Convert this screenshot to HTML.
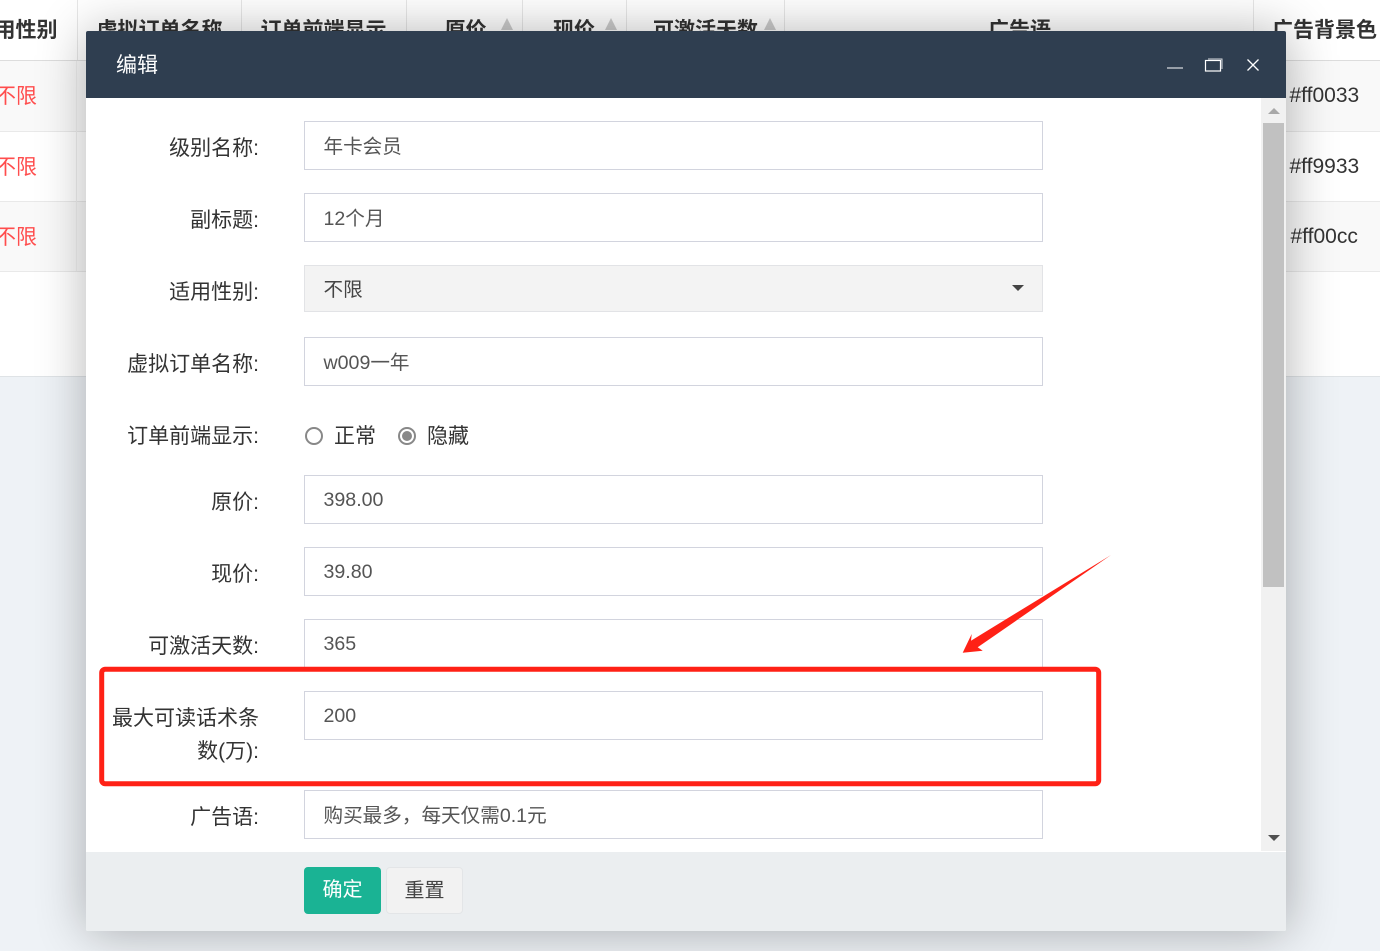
<!DOCTYPE html>
<html lang="zh-CN"><head><meta charset="utf-8"><title>编辑</title>
<style>
*{box-sizing:border-box}
html,body{margin:0;padding:0;width:1380px;height:951px;overflow:hidden;background:#eef2f6}
body{position:relative;font-family:"Liberation Sans","Noto Sans CJK SC",sans-serif;font-size:21px;color:#333}
.a{position:absolute;white-space:nowrap}
.th{top:16px;font-weight:bold;line-height:30px;color:#333}
.sep{position:absolute;top:0;height:60px;width:1px;background:#e7e7e7}
.rsep{position:absolute;width:1px;background:#eeeeee}
.tri{position:absolute;top:18px;width:0;height:0;border-left:6px solid transparent;border-right:6px solid transparent;border-bottom:12px solid #cccccc}
.row{position:absolute;left:0;width:1380px;height:70px;border-bottom:1px solid #e9e9e9}
.no{left:-5px;color:#ff4d4d;line-height:30px}
.hx{line-height:30px;color:#333}
#m{position:absolute;left:86px;top:31px;width:1200px;height:900px;background:#fff;border-radius:2px;box-shadow:1px 1px 50px rgba(0,0,0,.3);overflow:hidden}
#h{position:absolute;left:0;top:0;width:1200px;height:67px;background:#2f3e50;color:#fff}
#f{position:absolute;left:0;top:821px;width:1200px;height:79px;background:#ebeef0}
.lb{position:absolute;right:1027px;text-align:right;color:#333;line-height:33px;white-space:nowrap}
.ip{position:absolute;left:218px;width:739px;height:49px;background:#fff;border:1px solid #d2d4de;padding-left:18.5px;font-size:19.6px;line-height:48px;color:#555;white-space:nowrap}
.ip.c{line-height:50px}
.ra{position:absolute;width:18px;height:18px;border-radius:50%;border:2px solid #888;background:#fff}
</style></head><body>
<div class="a" style="left:0;top:0;width:1380px;height:377px;background:#fff;border-bottom:1px solid #dfe3e6"></div>
<div class="a" style="left:0;top:60px;width:1380px;height:1px;background:#ddd"></div>
<div class="row" style="top:61px;height:71px;background:#f9f9f9"></div>
<div class="row" style="top:132px;background:#fff"></div>
<div class="row" style="top:202px;background:#f9f9f9"></div>
<div class="sep" style="left:77px"></div><div class="sep" style="left:241px"></div><div class="sep" style="left:406px"></div><div class="sep" style="left:522px"></div><div class="sep" style="left:626px"></div><div class="sep" style="left:784px"></div><div class="sep" style="left:1253px"></div>
<div class="rsep" style="left:76px;top:61px;height:210px"></div>
<div class="a th" style="left:-26.5px">适用性别</div>
<div class="a th" style="left:96.5px">虚拟订单名称</div>
<div class="a th" style="left:260.5px">订单前端显示</div>
<div class="a th" style="left:444.5px">原价</div>
<div class="a th" style="left:553px">现价</div>
<div class="a th" style="left:653px">可激活天数</div>
<div class="a th" style="left:988px">广告语</div>
<div class="a th" style="left:1272px">广告背景色</div>
<div class="tri" style="left:501px"></div><div class="tri" style="left:605px"></div><div class="tri" style="left:764px"></div>
<div class="a no" style="top:82px">不限</div>
<div class="a no" style="top:153px">不限</div>
<div class="a no" style="top:223px">不限</div>
<div class="a hx" style="left:1289.5px;top:81px">#ff0033</div>
<div class="a hx" style="left:1289.5px;top:152px">#ff9933</div>
<div class="a hx" style="left:1290.5px;top:222px">#ff00cc</div>

<div id="m">
 <div id="h">
  <div class="a" style="left:30px;top:18px;line-height:34px;color:#fff">编辑</div>
  <svg class="a" style="left:1070px;top:20px" width="120" height="30" viewBox="0 0 120 30" fill="none" stroke="#fff">
   <path d="M11 17H27" stroke-width="1.1"/>
   <rect x="49.5" y="9.5" width="15" height="10.5" stroke-width="1.2"/>
   <path d="M52 8H66V18" stroke-width="1" opacity=".8"/>
   <path d="M91.5 8.5L102.5 19.5M102.5 8.5L91.5 19.5" stroke-width="1.3"/>
  </svg>
 </div>

 <div class="lb" style="top:101px">级别名称:</div>
 <div class="ip c" style="top:90px">年卡会员</div>
 <div class="lb" style="top:173px">副标题:</div>
 <div class="ip c" style="top:162px">12个月</div>
 <div class="lb" style="top:245px">适用性别:</div>
 <div class="ip c" style="top:234px;height:47px;line-height:48px;background:#f3f3f3;border-color:#e2e3e6;color:#444">不限</div>
 <div class="a" style="left:926px;top:254px;width:0;height:0;border-left:6px solid transparent;border-right:6px solid transparent;border-top:6px solid #444"></div>
 <div class="lb" style="top:317px">虚拟订单名称:</div>
 <div class="ip c" style="top:306px">w009一年</div>
 <div class="lb" style="top:389px">订单前端显示:</div>
 <div class="ra" style="left:219px;top:396px"></div>
 <div class="a" style="left:248px;top:389px;line-height:33px;color:#333">正常</div>
 <div class="ra" style="left:312px;top:396px"></div>
 <div class="a" style="left:316px;top:400px;width:10px;height:10px;border-radius:50%;background:#888"></div>
 <div class="a" style="left:341px;top:389px;line-height:33px;color:#333">隐藏</div>
 <div class="lb" style="top:455px">原价:</div>
 <div class="ip" style="top:444px">398.00</div>
 <div class="lb" style="top:527px">现价:</div>
 <div class="ip" style="top:516px">39.80</div>
 <div class="lb" style="top:599px">可激活天数:</div>
 <div class="ip" style="top:588px">365</div>
 <div class="lb" style="top:671px">最大可读话术条<br>数(万):</div>
 <div class="ip" style="top:660px">200</div>
 <div class="lb" style="top:770px">广告语:</div>
 <div class="ip c" style="top:759px">购买最多，每天仅需0.1元</div>

 <div class="a" style="left:1175px;top:67px;width:25px;height:753px;background:#f1f1f1"></div>
 <div class="a" style="left:1177px;top:92px;width:21px;height:464px;background:#c1c1c1"></div>
 <div class="a" style="left:1182px;top:77px;width:0;height:0;border-left:6px solid transparent;border-right:6px solid transparent;border-bottom:6px solid #a8a8a8"></div>
 <div class="a" style="left:1182px;top:804px;width:0;height:0;border-left:6px solid transparent;border-right:6px solid transparent;border-top:6px solid #505050"></div>

 <div id="f">
  <div class="a" style="left:218px;top:15px;width:77px;height:47px;background:#1ab394;border-radius:4px;color:#fff;font-size:20px;line-height:47px;text-align:center">确定</div>
  <div class="a" style="left:300px;top:15px;width:77px;height:47px;background:#f2f2f2;border:1px solid #e3e5e7;border-radius:4px;color:#444;font-size:20px;line-height:47px;text-align:center">重置</div>
 </div>
</div>

<svg class="a" style="left:0;top:0" width="1380" height="951" viewBox="0 0 1380 951" fill="none">
 <rect x="101.7" y="669.2" width="997" height="114.6" rx="3.5" stroke="#ff2116" stroke-width="5"/>
 <path d="M1111 555L977.7 647.3L982.7 650.7L962.7 652.7L971.7 634L971 640.7Z" fill="#ff2116"/>
</svg>
</body></html>
